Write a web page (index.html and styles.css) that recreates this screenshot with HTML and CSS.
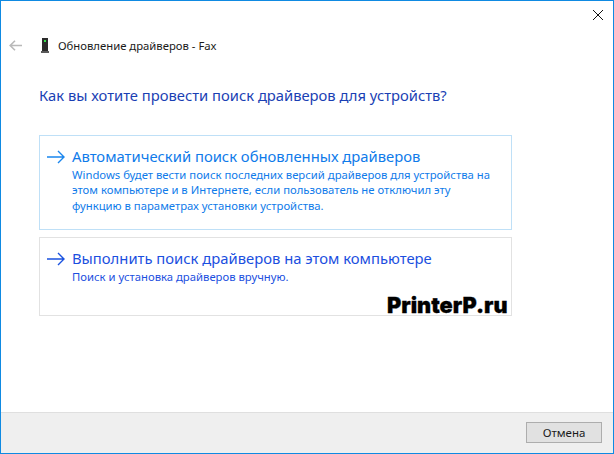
FILE: index.html
```html
<!DOCTYPE html>
<html lang="ru">
<head>
<meta charset="utf-8">
<title>Обновление драйверов - Fax</title>
<link rel="stylesheet" href="styles.css">
</head>
<body>
<div class="window">
  <button class="close" aria-label="Закрыть">
    <svg width="10" height="10" viewBox="0 0 10 10"><path d="M0 0L10 10M10 0L0 10" stroke="#111" stroke-width="1" fill="none"/></svg>
  </button>
  <main class="content">
    <div class="nav">
      <svg class="back" width="13" height="11" viewBox="0 0 13 11"><path d="M13 5.5H1.2M6 .7L1.2 5.5L6 10.3" stroke="#b9b9b9" stroke-width="1.6" fill="none"/></svg>
      <svg class="device" width="8" height="15" viewBox="0 0 8 15"><rect x="1" y="0" width="6" height="13" fill="#2b2b2b"/><rect x="3" y="2" width="2" height="2" fill="#35e04a"/><rect x="0" y="13" width="8" height="2" fill="#5a5a5a"/></svg>
      <span class="nav-title">Обновление драйверов - Fax</span>
    </div>
    <h1 class="heading">Как вы хотите провести поиск драйверов для устройств?</h1>
    <div class="options">
      <a class="option option-active">
        <svg class="arrow" width="18" height="14" viewBox="0 0 18 14"><path d="M0 7H17M11 1L17 7L11 13" stroke="#1a86ee" stroke-width="1.4" fill="none"/></svg>
        <div class="option-text">
          <div class="option-title">Автоматический поиск обновленных драйверов</div>
          <div class="option-desc">Windows будет вести поиск последних версий драйверов для устройства на этом компьютере и в Интернете, если пользователь не отключил эту функцию в параметрах установки устройства.</div>
        </div>
      </a>
      <a class="option option-plain">
        <svg class="arrow" width="18" height="14" viewBox="0 0 18 14"><path d="M0 7H17M11 1L17 7L11 13" stroke="#1a52e0" stroke-width="1.4" fill="none"/></svg>
        <div class="option-text">
          <div class="option-title">Выполнить поиск драйверов на этом компьютере</div>
          <div class="option-desc">Поиск и установка драйверов вручную.</div>
        </div>
      </a>
    </div>
    <div class="watermark">PrinterP.ru</div>
  </main>
  <footer class="footer">
    <button class="cancel">Отмена</button>
  </footer>
</div>
</body>
</html>
```
FILE: styles.css
```css
* { box-sizing: border-box; }
html, body { margin: 0; height: 100%; }
body { background: #fff; font-family: "Noto Sans", "Open Sans", sans-serif; }
.window {
  position: relative;
  width: 614px;
  height: 454px;
  border: 1px solid #0f8ae2;
  background: #fff;
  display: flex;
  flex-direction: column;
}
.close {
  position: absolute;
  top: 8px;
  right: 9px;
  width: 12px;
  height: 12px;
  padding: 1px;
  border: 0;
  background: none;
  display: flex;
}
.content { position: relative; flex: 1; display: flex; flex-direction: column; padding: 36px 0 0 8px; }
.nav { display: flex; align-items: center; height: 17px; color: #1a1a1a; font-size: 11.3px; }
.back { margin-right: 19px; }
.device { margin-right: 9px; }
.heading {
  margin: 30px 0 0 30px;
  font-size: 14.75px;
  line-height: 22px;
  font-weight: 400;
  color: #1a3fb4;
}
.options { margin: 29px 0 0 30px; display: flex; flex-direction: column; gap: 7px; width: 473px; }
.option { display: flex; align-items: flex-start; padding: 11px 16px 0 7px; border: 1px solid; }
.option-active { height: 95px; border-color: #bfe0f7; color: #0f7bea; }
.option-plain { height: 79px; border-color: #e2e2e2; color: #1b4fe0; }
.arrow { flex: none; margin: 3px 7px 0 0; }
.option-title { font-size: 14.8px; line-height: 19px; white-space: nowrap; }
.option-desc { font-size: 11.3px; line-height: 15.4px; margin-top: 1px; }
.watermark {
  position: absolute;
  left: 386px;
  top: 290px;
  font-family: "Inter", "Noto Sans", sans-serif;
  font-size: 21.7px;
  line-height: 28px;
  font-weight: 900;
  color: #000;
  -webkit-text-stroke: 0.3px #000;
}
.footer {
  flex: none;
  height: 41px;
  background: #efefef;
  border-top: 1px solid #dfdfdf;
  display: flex;
  justify-content: flex-end;
  align-items: flex-start;
  padding: 9px 11px 0 0;
}
.cancel {
  width: 76px;
  height: 21px;
  padding: 0;
  border: 1px solid #adadad;
  background: #e1e1e1;
  color: #1a1a1a;
  font: 11.5px/19px "Noto Sans", "Open Sans", sans-serif;
}
```
